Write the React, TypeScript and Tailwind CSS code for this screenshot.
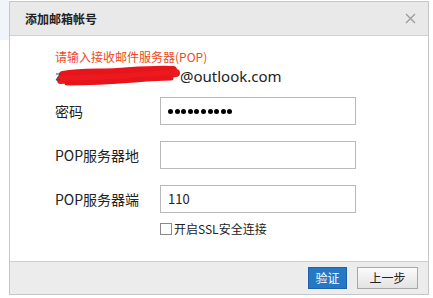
import * as React from "react";

const cjk = "font-['Noto_Sans_CJK_SC','Noto_Sans',sans-serif]";

function Scribble() {
  return (
    <svg width="126" height="22" viewBox="0 0 126 22" className="shrink-0">
      <path
        d="M8 10 C 25 7, 45 8, 62 7 S 100 4, 118 5"
        stroke="#e8141c"
        strokeWidth="8"
        fill="none"
        strokeLinecap="round"
      />
      <path
        d="M6 15 C 25 13, 50 14, 75 12 S 105 10, 121 8"
        stroke="#ea1a1f"
        strokeWidth="8"
        fill="none"
        strokeLinecap="round"
      />
      <path
        d="M12 18 C 30 18, 55 17, 80 15 S 105 13, 116 13"
        stroke="#e8141c"
        strokeWidth="5"
        fill="none"
        strokeLinecap="round"
      />
      <path d="M1 9 L 5 9 L 1 15 L 5 15" stroke="#444" strokeWidth="1" fill="none" />
    </svg>
  );
}

function Row({ label, children }: { label: string; children?: React.ReactNode }) {
  return (
    <div className="flex items-center h-[28px]">
      <div className="w-[105px] text-[14px] text-[#222]">{label}</div>
      <div className="w-[196px] h-[28px] border border-[#b9b9b9] bg-white flex items-center px-[7px] text-[13px] text-[#222]">
        {children}
      </div>
    </div>
  );
}

export default function App() {
  return (
    <div className={`w-[433px] h-[298px] bg-white flex ${cjk}`}>
      <div className="w-[9px] shrink-0">
        <div className="h-[40px] bg-[#f1f5fb]" />
      </div>
      <div className="mt-[1px] w-[420px] h-[294px] border border-[#c6c6c6] flex flex-col">
        {/* title */}
        <div className="h-[34px] bg-[#e9e9e9] border-b border-[#d2d2d2] flex items-center justify-between pl-[15px] pr-[12px]">
          <span className="text-[12px] font-bold text-[#222]">添加邮箱帐号</span>
          <svg width="11" height="11" viewBox="0 0 11 11">
            <path d="M1 1 L10 10 M10 1 L1 10" stroke="#9a9a9a" strokeWidth="1.3" />
          </svg>
        </div>

        {/* body */}
        <div className="flex-1 bg-white pl-[45px] pt-[13px]">
          <div className="h-[16px] leading-[16px] text-[12px] text-[#ee4a1e]">请输入接收邮件服务器(POP)</div>
          <div className="mt-[1px] h-[20px] flex items-center">
            <Scribble />
            <span className="text-[15px] text-[#222] font-['Noto_Sans',sans-serif] -ml-[1px]">@outlook.com</span>
          </div>
          <div className="mt-[11px] flex flex-col gap-[16px]">
            <Row label="密码">
              <div className="flex gap-[1.6px]">
                {Array.from({ length: 10 }).map((_, i) => (
                  <span key={i} className="w-[5px] h-[5px] rounded-full bg-black" />
                ))}
              </div>
            </Row>
            <Row label="POP服务器地" />
            <Row label="POP服务器端">110</Row>
          </div>
          <div className="mt-[10px] ml-[105px] flex items-center h-[12px] gap-[2px]">
            <span className="w-[12px] h-[12px] border border-[#8a8a8a] bg-white" />
            <span className="text-[12px] text-[#222] font-['Noto_Sans_CJK_SC',sans-serif]">开启SSL安全连接</span>
          </div>
        </div>

        {/* footer */}
        <div className="h-[33px] bg-[#ececec] border-t border-[#cfcfcf] flex items-center justify-end pr-[10px] gap-[10px]">
          <button className="w-[39px] h-[22px] bg-[#2678c4] border border-[#1b62a8] text-white text-[12px] flex items-center justify-center">
            验证
          </button>
          <button className="w-[61px] h-[22px] bg-gradient-to-b from-[#fbfbfb] to-[#e3e3e3] border border-[#a8a8a8] text-[#222] text-[12px] flex items-center justify-center">
            上一步
          </button>
        </div>
      </div>
    </div>
  );
}
